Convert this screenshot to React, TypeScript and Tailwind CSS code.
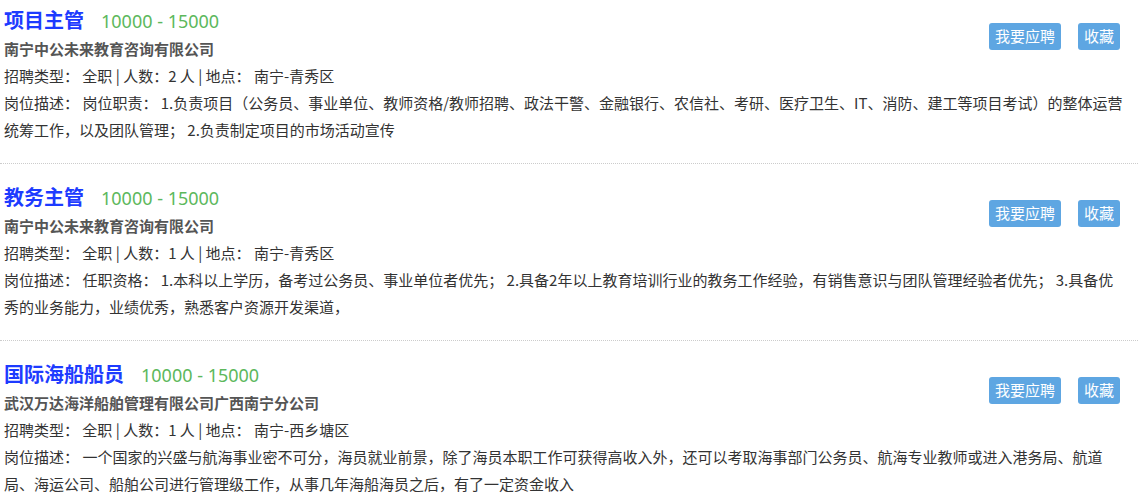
const jobs = [
  {
    title: "项目主管",
    salary: "10000 - 15000",
    company: "南宁中公未来教育咨询有限公司",
    count: "2",
    place: "南宁-青秀区",
    desc: "岗位职责： 1.负责项目（公务员、事业单位、教师资格/教师招聘、政法干警、金融银行、农信社、考研、医疗卫生、IT、消防、建工等项目考试）的整体运营统筹工作，以及团队管理； 2.负责制定项目的市场活动宣传",
  },
  {
    title: "教务主管",
    salary: "10000 - 15000",
    company: "南宁中公未来教育咨询有限公司",
    count: "1",
    place: "南宁-青秀区",
    desc: "任职资格： 1.本科以上学历，备考过公务员、事业单位者优先； 2.具备2年以上教育培训行业的教务工作经验，有销售意识与团队管理经验者优先； 3.具备优秀的业务能力，业绩优秀，熟悉客户资源开发渠道，",
  },
  {
    title: "国际海船船员",
    salary: "10000 - 15000",
    company: "武汉万达海洋船舶管理有限公司广西南宁分公司",
    count: "1",
    place: "南宁-西乡塘区",
    desc: "一个国家的兴盛与航海事业密不可分，海员就业前景，除了海员本职工作可获得高收入外，还可以考取海事部门公务员、航海专业教师或进入港务局、航道局、海运公司、船舶公司进行管理级工作，从事几年海船海员之后，有了一定资金收入",
  },
]

function JobItem({ job, first }: { job: (typeof jobs)[number]; first: boolean }) {
  return (
    <div
      className={`border-b border-dotted border-[#cccccc] pl-1 pr-[10px] pb-5 ${
        first ? "pt-[6px]" : "pt-[19px]"
      }`}
    >
      <div className="flex justify-between">
        <div>
          <div className="flex items-baseline gap-[17px] leading-[28px]">
            <h3 className="text-[20px] font-bold text-[#1d3bff]">{job.title}</h3>
            <span className="font-['Noto_Sans',sans-serif] text-[18px] text-[#5cb85c]">
              {job.salary}
            </span>
          </div>
          <p className="font-bold leading-[27px] text-[#555555]">{job.company}</p>
        </div>
        <div className="mr-2 mt-[17px] flex gap-[17px]">
          <button className="h-[27px] rounded-[3px] bg-[#5ea6e2] px-[6px] text-[15px] text-white">
            我要应聘
          </button>
          <button className="h-[27px] rounded-[3px] bg-[#5ea6e2] px-[6px] text-[15px] text-white">
            收藏
          </button>
        </div>
      </div>
      <p className="leading-[27px]">
        招聘类型： 全职 | 人数：{job.count} 人 | 地点： {job.place}
      </p>
      <p className="leading-[27px]">岗位描述： {job.desc}</p>
    </div>
  )
}

export default function App() {
  return (
    <div className="min-h-screen bg-white pr-1 font-['Noto_Sans_CJK_SC',sans-serif] text-[15px] text-[#333333]">
      {jobs.map((job, i) => (
        <JobItem key={job.title} job={job} first={i === 0} />
      ))}
    </div>
  )
}
